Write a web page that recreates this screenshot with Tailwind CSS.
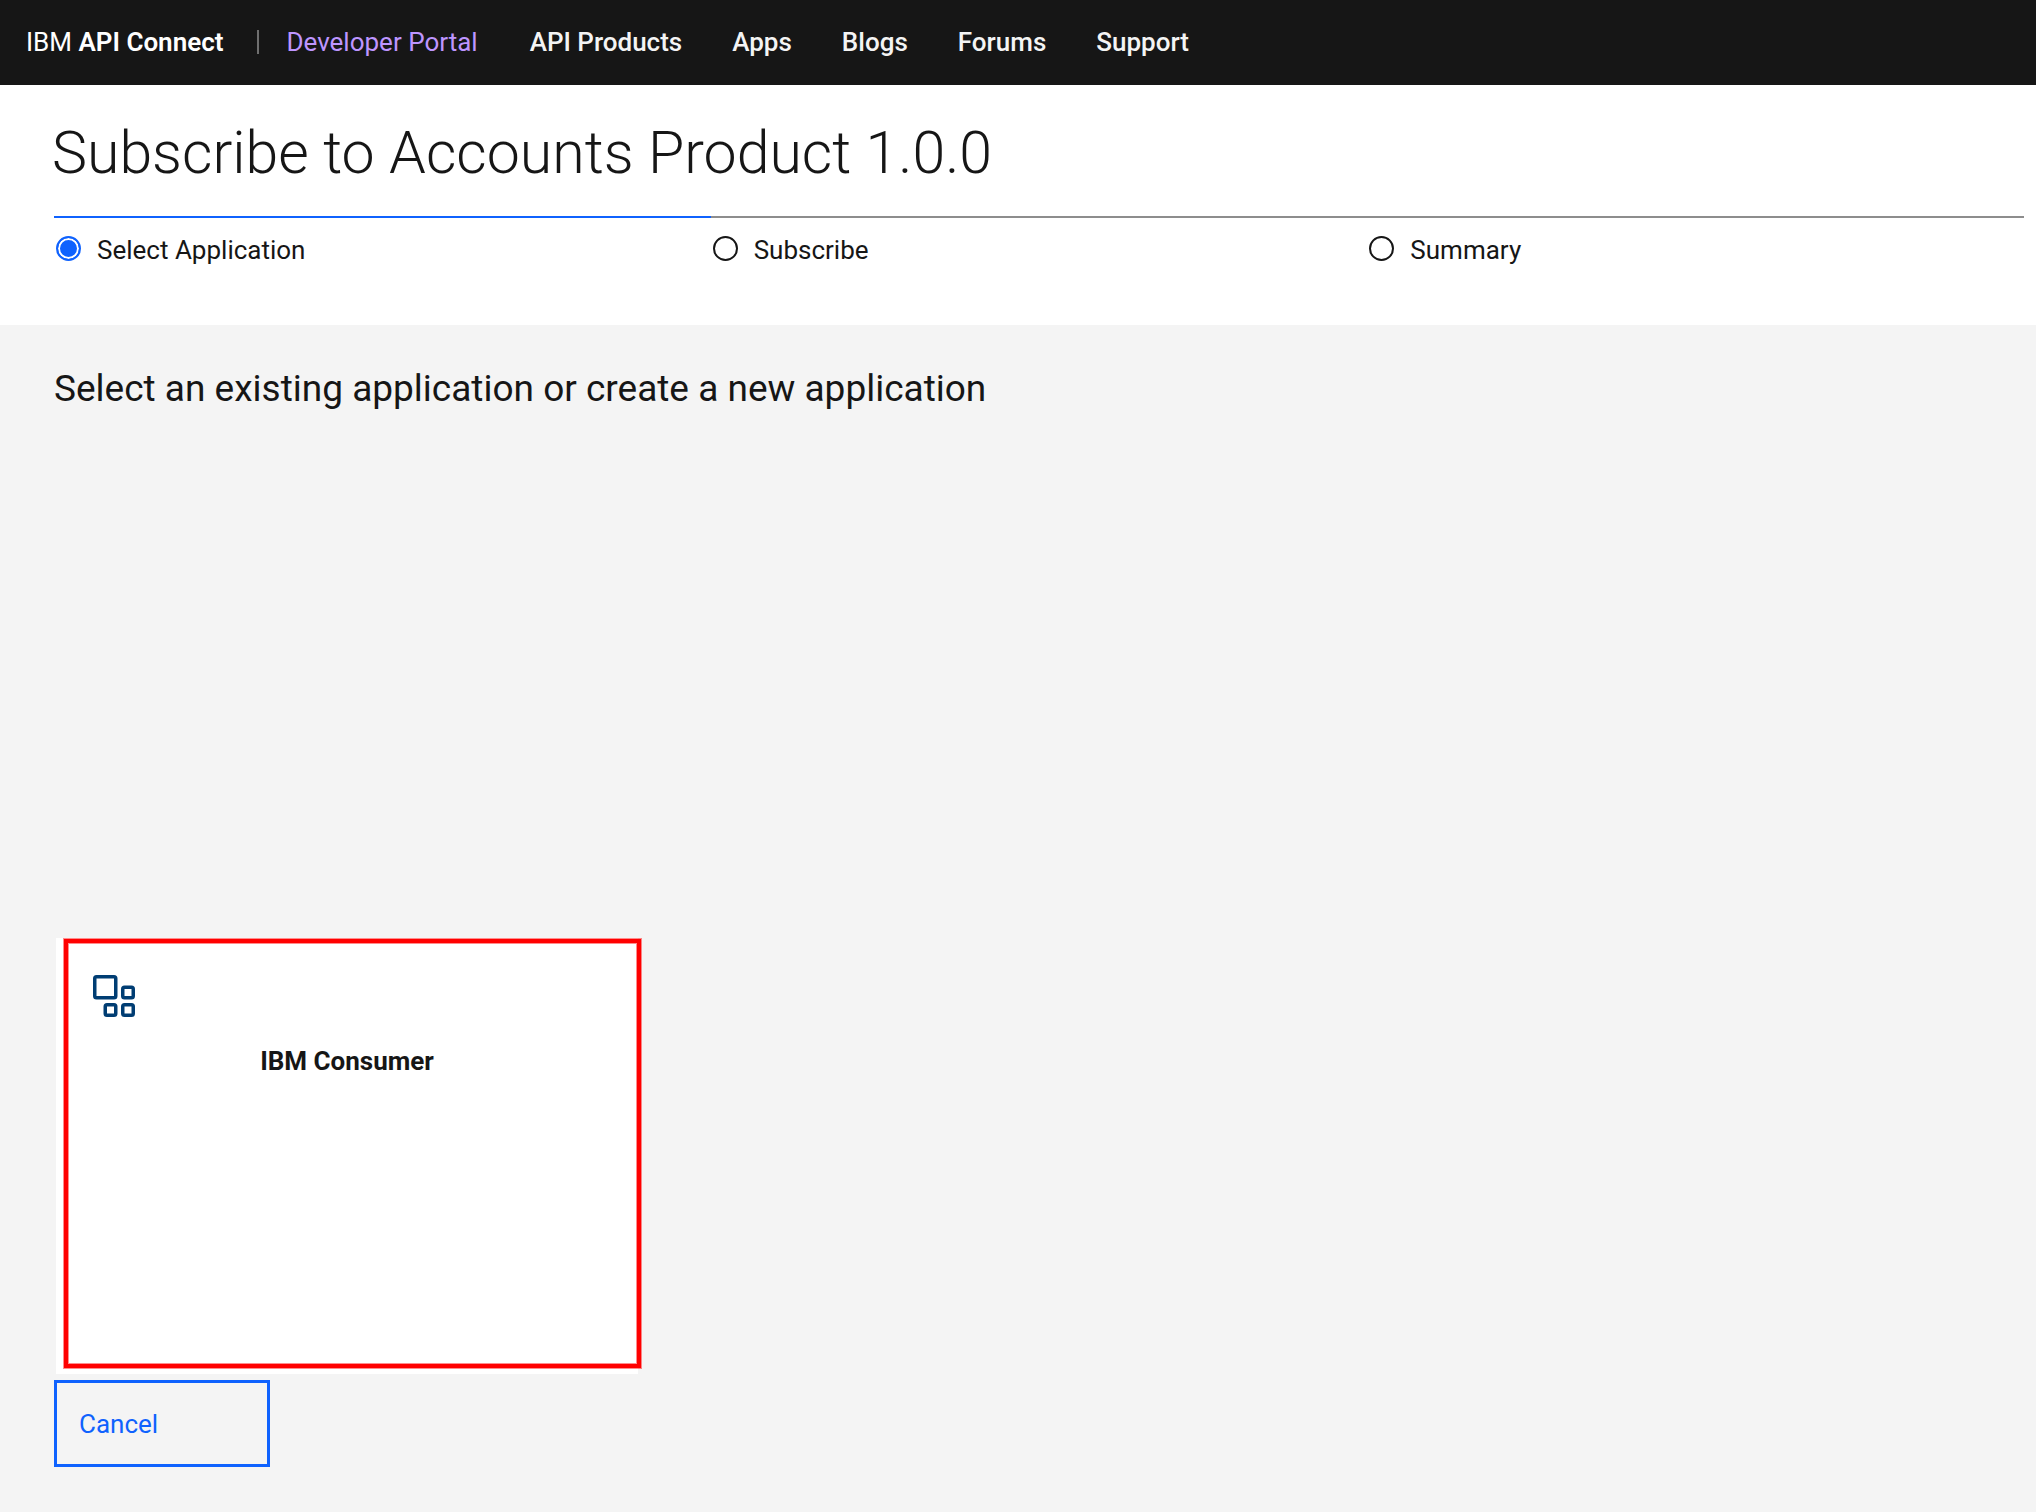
<!DOCTYPE html>
<html lang="en">
<head>
<meta charset="utf-8">
<meta name="viewport" content="width=device-width, initial-scale=1">
<title>Subscribe to Accounts Product 1.0.0 | IBM API Connect</title>
<script src="https://cdn.jsdelivr.net/npm/@tailwindcss/browser@4"></script>
</head>
<body class="flex min-h-screen flex-col bg-[#f4f4f4] font-['Roboto',sans-serif] text-[26px] leading-9 text-[#161616]">
  <header class="flex h-[85px] items-center bg-[#161616] pb-0.5 pl-[26px] text-white">
    <a href="#" class="whitespace-nowrap">IBM <span class="font-semibold">API Connect</span></a>
    <span class="ml-[34px] h-6 w-[2px] bg-[#6f6f6f]"></span>
    <a href="#" class="ml-[27px] whitespace-nowrap text-[#be95ff]">Developer Portal</a>
    <nav class="ml-[52px] flex gap-[50px] whitespace-nowrap font-medium text-[#f4f4f4]">
      <a href="#">API Products</a>
      <a href="#">Apps</a>
      <a href="#">Blogs</a>
      <a href="#">Forums</a>
      <a href="#">Support</a>
    </nav>
  </header>

  <section class="bg-white pt-8 pr-3 pb-[57px] pl-[54px]">
    <h1 class="-ml-0.5 text-[59px] leading-[72px] font-light">Subscribe to Accounts Product 1.0.0</h1>
    <div class="mt-[27px] grid grid-cols-3">
      <label class="flex items-start gap-4 border-t-2 border-[#0f62fe] pt-[14px] pl-0.5">
        <input type="radio" name="step" checked class="mt-1 size-[25px] appearance-none rounded-full border-2 border-[#0f62fe] bg-[#0f62fe] shadow-[inset_0_0_0_2px_white]">
        Select Application
      </label>
      <label class="flex items-start gap-4 border-t-2 border-[#8d8d8d] pt-[14px] pl-0.5">
        <input type="radio" name="step" class="mt-1 size-[25px] appearance-none rounded-full border-2 border-[#161616]">
        Subscribe
      </label>
      <label class="flex items-start gap-4 border-t-2 border-[#8d8d8d] pt-[14px] pl-0.5">
        <input type="radio" name="step" class="mt-1 size-[25px] appearance-none rounded-full border-2 border-[#161616]">
        Summary
      </label>
    </div>
  </section>

  <main class="flex-1 px-[54px] pt-10 pb-10">
    <h2 class="text-[37px] leading-[48px]">Select an existing application or create a new application</h2>
    <div class="mt-[525px] ml-0.5 flex">
      <a href="#" class="relative flex h-[436px] w-[582px] flex-col bg-white pt-[37px]">
        <svg class="ml-[37px] size-[42px]" viewBox="0 0 12 12" fill="none" stroke="#003d73" stroke-width="1" aria-hidden="true">
          <rect x=".5" y=".5" width="6" height="6" rx=".5"/>
          <rect x="8.5" y="3.5" width="3" height="3" rx=".5"/>
          <rect x="3.5" y="8.5" width="3" height="3" rx=".5"/>
          <rect x="8.5" y="8.5" width="3" height="3" rx=".5"/>
        </svg>
        <span class="mt-[26px] text-center font-bold">IBM Consumer</span>
        <span class="absolute top-px left-2 h-[429px] w-[577px] border-4 border-[#ff0000] shadow-[0_0_0_1px_rgba(255,0,0,0.45),inset_0_0_0_1px_rgba(255,0,0,0.45)]"></span>
      </a>
    </div>
    <button type="button" class="mt-1.5 h-[87px] w-[216px] border-3 border-[#0f62fe] px-[22px] text-left text-[#0f62fe]">Cancel</button>
  </main>
</body>
</html>
